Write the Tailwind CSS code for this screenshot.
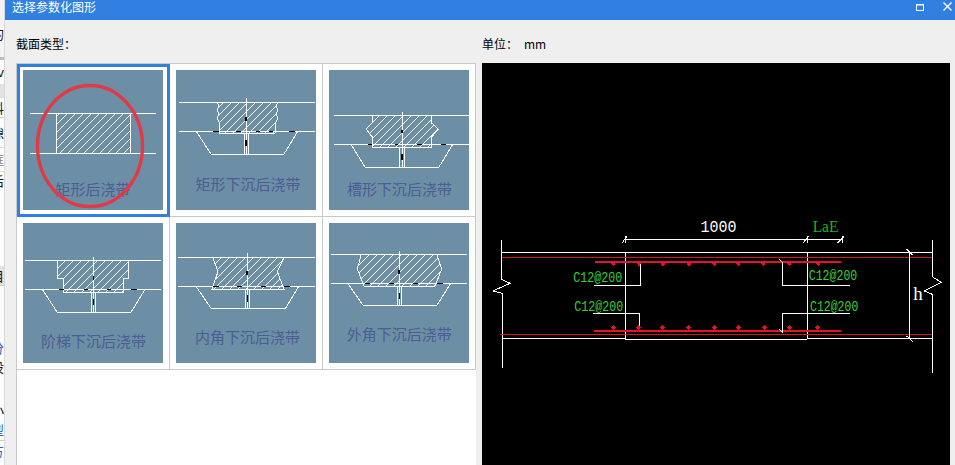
<!DOCTYPE html>
<html lang="zh-CN">
<head>
    <meta charset="UTF-8">
    <title>选择参数化图形</title>
    <script src="https://cdn.jsdelivr.net/npm/@tailwindcss/browser@4"></script>
</head>
<body class="bg-[#f0f0f0] h-[465px] w-[955px] overflow-hidden flex font-['Noto_Sans_CJK_SC','Liberation_Sans',sans-serif]">

    <!-- window behind the dialog, only its right edge shows -->
    <div class="w-[4px] h-[465px] shrink-0 flex flex-col bg-white text-[13px] leading-[14px] text-[#111]">
        <div class="h-[26px] bg-[#f3f3f3]"></div>
        <div class="h-[16px] flex justify-end items-center overflow-hidden"><span class="shrink-0">的</span></div>
        <div class="h-[15px] bg-[#f3f3f3]"></div>
        <div class="h-[3px] bg-[#bdbdbd]"></div>
        <div class="h-[24px] flex justify-end items-center overflow-hidden"><span class="shrink-0">v</span></div>
        <div class="h-[14px] bg-[#e2e2e2]"></div>
        <div class="h-[20px] flex justify-end items-center overflow-hidden border-b border-[#ccc]"><span class="shrink-0">料</span></div>
        <div class="h-[30px] flex justify-end items-center overflow-hidden border-b border-[#ddd]"><span class="shrink-0">隙</span></div>
        <div class="h-[24px] flex justify-end items-center overflow-hidden border-b border-[#ddd] text-[#888]"><span class="shrink-0">框</span></div>
        <div class="h-[18px] flex justify-end items-center overflow-hidden"><span class="shrink-0">后</span></div>
        <div class="h-[76px] bg-white"></div>
        <div class="h-[20px] bg-[#e2e2e2] flex justify-end items-center overflow-hidden border-b border-[#ccc]"><span class="shrink-0">目</span></div>
        <div class="h-[53px] bg-[#fafafa]"></div>
        <div class="h-[18px] flex justify-end items-center overflow-hidden text-[#2a5fc4]"><span class="shrink-0">分</span></div>
        <div class="h-[20px] flex justify-end items-center overflow-hidden"><span class="shrink-0">设</span></div>
        <div class="h-[23px]"></div>
        <div class="h-[20px] flex justify-end items-center overflow-hidden"><span class="shrink-0">小</span></div>
        <div class="h-[21px] flex justify-end items-center overflow-hidden text-[#2a5fc4] border-b border-[#ccc]"><span class="shrink-0">型</span></div>
        <div class="h-[20px] flex justify-end items-center overflow-hidden text-[#2a5fc4]"><span class="shrink-0">方</span></div>
    </div>

    <!-- dialog -->
    <div class="flex-1 h-[465px] flex flex-col bg-[#efefef] border-l border-[#d8d8d8]">
        <div class="h-[20px] shrink-0 bg-[#2f80e0] flex items-start justify-between text-white">
            <span class="ml-[7px] text-[12px] leading-[13px]">选择参数化图形</span>
            <div class="flex items-center">
                <svg width="8" height="7" viewBox="0 0 8 7" class="mt-[3px] mr-[19px]"><rect x="0.5" y="0.5" width="7" height="6" fill="none" stroke="#fff"/><path d="M0 1H8" stroke="#fff"/></svg>
                <svg width="9" height="9" viewBox="0 0 9 9" class="mt-[2px] mr-[3px]"><path d="M0.5 0.5L8.5 8.5M8.5 0.5L0.5 8.5" stroke="#fff" stroke-width="1.4"/></svg>
            </div>
        </div>

        <div class="flex-1 flex pl-[11px]">
            <!-- section type list -->
            <div class="w-[460px] flex flex-col">
                <div class="h-[43px] shrink-0 pt-[15px] text-[12px] leading-[18px] text-black">截面类型：</div>
                <div class="flex-1 bg-white border-l border-t border-[#c9c9c9]">
                    <svg width="0" height="0" class="absolute">
                        <defs>
                            <pattern id="hatch" width="8" height="8" patternUnits="userSpaceOnUse">
                                <path d="M0 8L8 0" stroke="#fff" stroke-width="1" shape-rendering="crispEdges"/>
                            </pattern>
                        </defs>
                    </svg>
                    <div class="grid grid-cols-[repeat(3,153px)] grid-rows-[153px_153px]">

                        <div class="pl-[3px] pt-[3px] pr-[4px] pb-[4px] border-[3px] border-[#2f80e0]">
                            <svg width="140" height="140" viewBox="0 0 140 140" class="block bg-[#6d8fa6]" fill="none" stroke="#fff" stroke-width="1" shape-rendering="crispEdges">
                                <rect x="33" y="43" width="74" height="40" fill="url(#hatch)"/>
                                <path d="M7 43H133M7 83H133"/>
                                <text x="70" y="125" text-anchor="middle" font-size="15" fill="#4b5d92" stroke="none">矩形后浇带</text>
                                <ellipse cx="67" cy="76" rx="52.5" ry="60.5" stroke="#e13a46" stroke-width="3.4" shape-rendering="geometricPrecision"/>
                            </svg>
                        </div>

                        <div class="p-[6px] border-r border-b border-[#c9c9c9]">
                            <svg width="140" height="140" viewBox="0 0 140 140" class="block bg-[#6d8fa6]" fill="none" stroke="#fff" stroke-width="1" shape-rendering="crispEdges">
                                <path d="M41 32L43 36L41 40L43 44L41 48L43 52L43 63H99L100 52L102 48L100 44L102 40L100 36L102 32Z" fill="url(#hatch)"/>
                                <path d="M3 32H139M3 61H139M43 63.5H99"/>
                                <path d="M20 61L35 84H108L122 61"/>
                                <path d="M68.5 64V84M72 64V84M70 28V84"/>
                                <path d="M37 61.5H43M60 61.5H65M80 61.5H84M93 61.5H97M113 61.5H119M70 47V51M70 70V76" stroke="#000" stroke-width="1.2"/>
                                <text x="72" y="119.5" text-anchor="middle" font-size="15" fill="#4b5d92" stroke="none">矩形下沉后浇带</text>
                            </svg>
                        </div>

                        <div class="p-[6px] border-r border-b border-[#c9c9c9]">
                            <svg width="140" height="140" viewBox="0 0 140 140" class="block bg-[#6d8fa6]" fill="none" stroke="#fff" stroke-width="1" shape-rendering="crispEdges">
                                <path d="M43.3 45.3V53L37 59L43.3 67V77H102.7V67L109.3 59L102.7 53V45.3Z" fill="url(#hatch)"/>
                                <path d="M5 45.3H140M5 74.3H140"/>
                                <path d="M22 74.3L36 97H110L123.7 74.3"/>
                                <path d="M70.5 77V97M75 77V97M73.3 42V97"/>
                                <path d="M39 74.5H43M66 74.5H69M88 74.5H93M112 74.5H117M73 60V63M73 84V90" stroke="#000" stroke-width="1.2"/>
                                <text x="70.5" y="124.5" text-anchor="middle" font-size="15" fill="#4b5d92" stroke="none">槽形下沉后浇带</text>
                            </svg>
                        </div>

                        <div class="p-[6px] border-r border-b border-[#c9c9c9]">
                            <svg width="140" height="140" viewBox="0 0 140 140" class="block bg-[#6d8fa6]" fill="none" stroke="#fff" stroke-width="1" shape-rendering="crispEdges">
                                <path d="M34.3 37.3V55.3H40.3V69.3H100.3V55.3H105.7V37.3Z" fill="url(#hatch)"/>
                                <path d="M2 37.3H138M2 66H138"/>
                                <path d="M19 66L34.3 89.3H108L122.3 66"/>
                                <path d="M68 69V89.3M72.5 69V89.3M70.3 34V89.3"/>
                                <path d="M36 66.3H41M61 66.3H65M84 66.3H88M108 66.3H114M70.3 53V57M70.3 76V82" stroke="#000" stroke-width="1.2"/>
                                <text x="70.5" y="124" text-anchor="middle" font-size="15" fill="#4b5d92" stroke="none">阶梯下沉后浇带</text>
                            </svg>
                        </div>

                        <div class="p-[6px] border-r border-b border-[#c9c9c9]">
                            <svg width="140" height="140" viewBox="0 0 140 140" class="block bg-[#6d8fa6]" fill="none" stroke="#fff" stroke-width="1" shape-rendering="crispEdges">
                                <path d="M36.7 34.3L42 48.7L36 66H108L101.3 48.7L108 34.3Z" fill="url(#hatch)"/>
                                <path d="M2.3 34.3H138.7M2.3 63.3H138.7"/>
                                <path d="M20 63.3L35.3 85.7H109.3L122.7 63.3"/>
                                <path d="M69.5 66V85.7M73.5 66V85.7M71.3 30V85.7"/>
                                <path d="M37 63.5H43M61 63.5H66M85 63.5H90M108 63.5H114M71 48V52M71.3 72V79" stroke="#000" stroke-width="1.2"/>
                                <text x="71.5" y="119.5" text-anchor="middle" font-size="15" fill="#4b5d92" stroke="none">内角下沉后浇带</text>
                            </svg>
                        </div>

                        <div class="p-[6px] border-r border-b border-[#c9c9c9]">
                            <svg width="140" height="140" viewBox="0 0 140 140" class="block bg-[#6d8fa6]" fill="none" stroke="#fff" stroke-width="1" shape-rendering="crispEdges">
                                <path d="M32.3 31.3L28.3 46L35 63.3H106L112.7 46L107.7 31.3Z" fill="url(#hatch)"/>
                                <path d="M1.7 31.3H138M1.7 60.3H138"/>
                                <path d="M18.7 60.3L34.3 82.7H107.7L121.7 60.3"/>
                                <path d="M68.3 63V82.7M72.5 63V82.7M70.3 28V82.7"/>
                                <path d="M36 60.5H41M60 60.5H65M84 60.5H89M108 60.5H114M70 47V51M70.3 70V76" stroke="#000" stroke-width="1.2"/>
                                <text x="70.3" y="116.5" text-anchor="middle" font-size="15" fill="#4b5d92" stroke="none">外角下沉后浇带</text>
                            </svg>
                        </div>
                    </div>
                </div>
            </div>

            <!-- preview -->
            <div class="ml-[6px] w-[468px] flex flex-col">
                <div class="h-[43px] shrink-0 pt-[15px] text-[12px] leading-[18px] text-black flex">
                    <span class="w-[42px]">单位：</span><span>mm</span>
                </div>
                <svg width="468" height="402" viewBox="482 63 468 402" class="block bg-black" fill="none" stroke="#fff" stroke-width="1" shape-rendering="crispEdges">
                    <!-- slab edges and break lines -->
                    <path d="M501.5 252.5H932M501.5 338.5H625M625 339.5H807M807 338.5H932"/>
                    <path d="M501.3 240V279L510 283.3L492.7 291L502 293.3V368.3"/>
                    <path d="M932.3 240V276.7L941 282.3L924.3 291L932.3 294.3V372.7"/>
                    <path d="M625 252V339M807.3 252V338"/>

                    <path d="M502 257.5H932M500 334.5H932" stroke="#d01a1e"/>
                    <path d="M595.3 262H840.7M594 331H840.7" stroke="#e8102a" stroke-width="2"/>

                    <!-- dimensions -->
                    <path d="M625 239.3H843M622.3 242.7L627.3 235.7M625 235.7V242.7M803.3 242.7L809.3 235.7M807 235.7V242.7M837.3 243.3L844 236.7M842 236V243"/>
                    <path d="M909.3 252V338M906.7 249.3L912.7 255M906.7 336L912.7 341.7"/>

                    <!-- stirrups -->
                    <path d="M594 285.3H640.7V263.3M593 313.3H639.7V326.7"/>
                    <path d="M850 285.3H782.3V261.7M779.3 259L783.3 263.3M850 313.3H782.3V331.7M779.3 329.3L783.3 333.3"/>

                    <!-- rebar points -->
                    <g fill="#e8102a" stroke="none">
                        <path d="M610.8 263H615.8L613.3 266.5ZM636.5 263H641.5L639 266.5ZM660.8 264L663.3 261.5L665.8 264L663.3 266.5ZM686.2 264L688.7 261.5L691.2 264L688.7 266.5ZM711.8 263H716.8L714.3 266.5ZM735.8 263H740.8L738.3 266.5ZM760.8 263H765.8L763.3 266.5ZM786.8 263H791.8L789.3 266.5ZM815.8 263H820.8L818.3 266.5Z"/>
                        <path d="M610.8 327.7L613.3 325.2L615.8 327.7L613.3 330.2ZM635.8 327.7L638.3 325.2L640.8 327.7L638.3 330.2ZM659.8 327.7L662.3 325.2L664.8 327.7L662.3 330.2ZM686.2 327.7L688.7 325.2L691.2 327.7L688.7 330.2ZM711.8 327.7L714.3 325.2L716.8 327.7L714.3 330.2ZM735.8 327.7L738.3 325.2L740.8 327.7L738.3 330.2ZM761.8 327.7L764.3 325.2L766.8 327.7L764.3 330.2ZM786.8 327.7L789.3 325.2L791.8 327.7L789.3 330.2ZM814.8 327.7L817.3 325.2L819.8 327.7L817.3 330.2Z"/>
                    </g>

                    <!-- labels -->
                    <g stroke="none" font-family="'Liberation Mono',monospace">
                        <text x="700.5" y="232.3" font-size="17" fill="#fff" textLength="36" lengthAdjust="spacingAndGlyphs">1000</text>
                        <text x="812.7" y="231.7" font-size="16" fill="#22b022" font-family="'Liberation Serif',serif" textLength="25.7" lengthAdjust="spacingAndGlyphs">LaE</text>
                        <text x="573.3" y="282.3" font-size="15" fill="#35d035" textLength="49" lengthAdjust="spacingAndGlyphs">C12@200</text>
                        <text x="574.3" y="311" font-size="15" fill="#35d035" textLength="49" lengthAdjust="spacingAndGlyphs">C12@200</text>
                        <text x="808.7" y="279.7" font-size="15" fill="#35d035" textLength="48.6" lengthAdjust="spacingAndGlyphs">C12@200</text>
                        <text x="810" y="310.7" font-size="15" fill="#35d035" textLength="48.3" lengthAdjust="spacingAndGlyphs">C12@200</text>
                        <text x="913.3" y="300" font-size="18" fill="#fff" font-family="'Liberation Serif',serif" textLength="9.5" lengthAdjust="spacingAndGlyphs">h</text>
                    </g>
                </svg>
            </div>
        </div>
    </div>
</body>
</html>
